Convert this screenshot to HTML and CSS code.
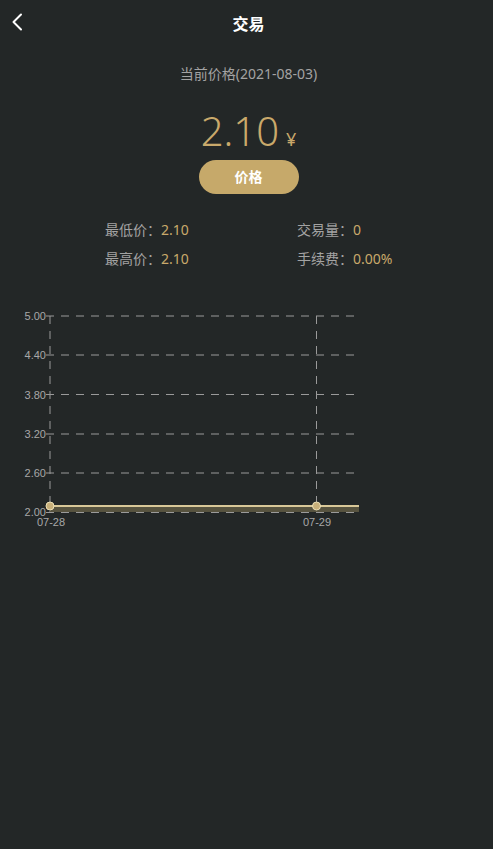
FILE: index.html
```html
<!DOCTYPE html>
<html lang="zh-CN">

<head>
  <meta charset="UTF-8">
  <meta name="viewport" content="width=device-width, initial-scale=1.0">
  <title>交易</title>
  <link rel="stylesheet" href="styles.css">
</head>

<body>
  <div class="page">
    <div class="header">
      <a class="back" href="#">
        <svg width="12" height="18" viewBox="0 0 12 18">
          <path d="M10 1.5 L2.5 9 L10 16.5" fill="none" stroke="#fff" stroke-width="2" stroke-linecap="round" stroke-linejoin="round" />
        </svg>
      </a>
      <h1 class="title">交易</h1>
    </div>

    <p class="date">当前价格(2021-08-03)</p>

    <div class="price">
      <span class="num">2.10</span>
      <span class="unit">¥</span>
    </div>

    <div class="btn-wrap">
      <a class="btn" href="#">价格</a>
    </div>

    <ul class="stats">
      <li><span class="label">最低价：</span><span class="val">2.10</span></li>
      <li><span class="label">交易量：</span><span class="val">0</span></li>
      <li><span class="label">最高价：</span><span class="val">2.10</span></li>
      <li><span class="label">手续费：</span><span class="val">0.00%</span></li>
    </ul>

    <div class="chart">
      <svg width="493" height="240" viewBox="0 0 493 240">
        <!-- 横向网格 -->
        <g class="grid">
          <line x1="46" y1="16" x2="361" y2="16" />
          <line x1="46" y1="55" x2="361" y2="55" />
          <line x1="46" y1="94.5" x2="361" y2="94.5" />
          <line x1="46" y1="134" x2="361" y2="134" />
          <line x1="46" y1="173" x2="361" y2="173" />
          <line x1="46" y1="212.5" x2="361" y2="212.5" />
          <line x1="50" y1="16" x2="50" y2="212" />
          <line x1="316.5" y1="16" x2="316.5" y2="206" />
        </g>
        <!-- 数据 -->
        <rect x="50" y="206" width="309" height="6" fill="#57533f" />
        <line x1="50" y1="206" x2="359" y2="206" stroke="#d9c898" stroke-width="2" />
        <circle cx="50" cy="206" r="4" class="dot" />
        <circle cx="316.5" cy="206" r="4" class="dot" />
        <!-- 坐标文字 -->
        <g class="ylabel">
          <text x="46" y="20">5.00</text>
          <text x="46" y="59">4.40</text>
          <text x="46" y="98.5">3.80</text>
          <text x="46" y="138">3.20</text>
          <text x="46" y="177">2.60</text>
          <text x="46" y="216">2.00</text>
        </g>
        <g class="xlabel">
          <text x="51" y="226">07-28</text>
          <text x="317" y="226">07-29</text>
        </g>
      </svg>
    </div>
  </div>
</body>

</html>
```

FILE: styles.css
```css
* {
  margin: 0;
  padding: 0;
}

ul {
  list-style: none
}

a {
  text-decoration: none;
}

body {
  background-color: #fff;
  font-family: "Noto Sans", "Noto Sans CJK SC", sans-serif;
}

.page {
  width: 493px;
  min-height: 849px;
  background-color: #232727;
  color: #a3a3a3;
}

.header {
  height: 46px;
  position: relative;
  display: flex;
  align-items: center;
  justify-content: center;
  padding-left: 4px;
}

.back {
  position: absolute;
  left: 11px;
  top: 13px;
}

.back svg {
  display: block;
}

.title {
  font-size: 16px;
  font-weight: bold;
  color: #fff;
  font-family: "Noto Sans CJK SC", sans-serif;
}

.date {
  margin-top: 18px;
  padding-left: 4px;
  text-align: center;
  font-size: 14px;
  line-height: 20px;
}

.price {
  margin-top: 27px;
  height: 40px;
  display: flex;
  justify-content: center;
  align-items: baseline;
  color: #c9a96b;
}

.price .num {
  font-size: 40px;
  font-weight: 300;
  line-height: 40px;
  margin-left: 4px;
}

.price .unit {
  font-size: 18px;
  margin-left: 7px;
}

.btn-wrap {
  margin-top: 9px;
  padding-left: 4px;
  display: flex;
  justify-content: center;
}

.btn {
  width: 100px;
  height: 34px;
  line-height: 34px;
  border-radius: 17px;
  background-color: #c6a96a;
  color: #fff;
  text-align: center;
  font-size: 14px;
  font-weight: bold;
}

.stats {
  margin-top: 21px;
  margin-left: 105px;
  display: grid;
  grid-template-columns: 192px auto;
  font-size: 14px;
  line-height: 29px;
}

.stats .val {
  color: #c9a96b;
}

.chart {
  margin-top: 27px;
}

.chart svg {
  display: block;
}

.grid line {
  stroke: #9a9a9a;
  stroke-width: 1;
  stroke-dasharray: 8 7;
}

.dot {
  fill: #c8b07a;
  stroke: #ece0b6;
  stroke-width: 1;
}

.ylabel text {
  fill: #a8a8a8;
  font-size: 11px;
  text-anchor: end;
  font-family: "Liberation Sans", sans-serif;
}

.xlabel text {
  fill: #a8a8a8;
  font-size: 11px;
  text-anchor: middle;
  font-family: "Liberation Sans", sans-serif;
}
```
